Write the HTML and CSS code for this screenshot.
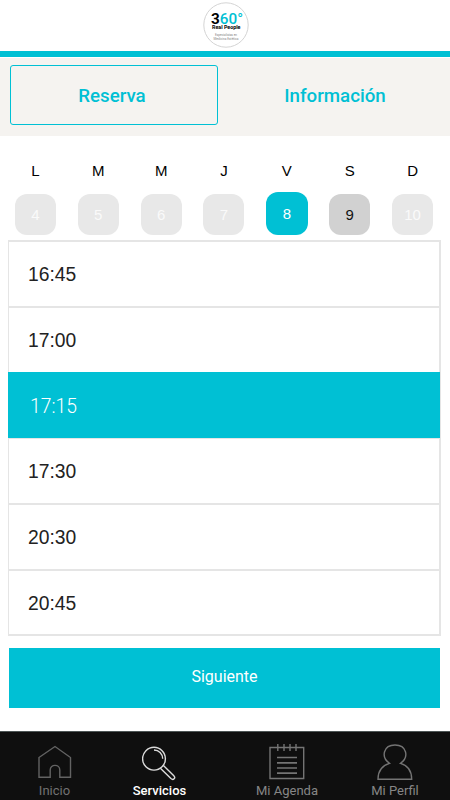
FILE: index.html
```html
<!DOCTYPE html>
<html lang="es">
<head>
    <meta charset="utf-8">
    <title>360 Real People</title>
    <meta name="viewport" content="width=device-width" />
    <link rel="stylesheet" href="styles.css">
</head>
<body>

<header class="header">
    <svg class="logo" width="46" height="46" viewBox="0 0 46 46">
        <circle cx="23" cy="23" r="22.2" fill="#fff" stroke="#d4d4d4" stroke-width="1"/>
        <text class="logo-number" x="8" y="21.5" textLength="32" lengthAdjust="spacingAndGlyphs">3<tspan class="logo-teal">60°</tspan></text>
        <text class="logo-name" x="9" y="27.3" textLength="28.5" lengthAdjust="spacingAndGlyphs">Real People</text>
        <text class="logo-tag" x="12" y="34.3" textLength="22" lengthAdjust="spacingAndGlyphs">Especialistas en</text>
        <text class="logo-tag" x="10.5" y="37.8" textLength="25" lengthAdjust="spacingAndGlyphs">Medicina Estética</text>
    </svg>
</header>

<div class="tabs">
    <a class="tab active">Reserva</a>
    <a class="tab">Información</a>
</div>

<div class="days">
    <div class="day"><span class="letter">L</span><span class="number">4</span></div>
    <div class="day"><span class="letter">M</span><span class="number">5</span></div>
    <div class="day"><span class="letter">M</span><span class="number">6</span></div>
    <div class="day"><span class="letter">J</span><span class="number">7</span></div>
    <div class="day"><span class="letter">V</span><span class="number selected">8</span></div>
    <div class="day"><span class="letter">S</span><span class="number available">9</span></div>
    <div class="day"><span class="letter">D</span><span class="number">10</span></div>
</div>

<ul class="hours">
    <li class="hour">16:45</li>
    <li class="hour">17:00</li>
    <li class="hour selected">17:15</li>
    <li class="hour">17:30</li>
    <li class="hour">20:30</li>
    <li class="hour">20:45</li>
</ul>

<button class="next">Siguiente</button>

<nav class="nav">
    <a class="nav-item home">
        <svg class="icon" width="36" height="38" viewBox="0 0 36 38">
            <path d="M2 14.5 L18 3.5 L33.5 14.5 V34.3 H22.8 V27 C22.8 20.8 13.2 20.8 13.2 27 V34.3 H2 Z"/>
        </svg>
        <span>Inicio</span>
    </a>
    <a class="nav-item active">
        <svg class="icon" width="36" height="38" viewBox="0 0 36 38">
            <circle cx="12" cy="15.7" r="11.4"/>
            <path d="M12 7 A8.8 8.8 0 0 1 20.7 15.7"/>
            <path d="M18.4 25.2 L28.9 35.5 C31.4 37.7 34 35 31.8 32.7 L21.2 22.3"/>
        </svg>
        <span>Servicios</span>
    </a>
    <a class="nav-item">
        <svg class="icon" width="36" height="38" viewBox="0 0 36 38">
            <path d="M1 4.5 H34.7 V35.5 H1 Z M8.8 1 V8 M15 1 V8 M21 1 V8 M27 1 V8"/>
            <path d="M8 14.5 H28 M8 19.8 H28 M8 25 H28 M8 30.2 H28" stroke-width="1.7"/>
        </svg>
        <span>Mi Agenda</span>
    </a>
    <a class="nav-item">
        <svg class="icon" width="36" height="38" viewBox="0 0 36 38">
            <path d="M12.5 20.3 C3.5 14 6.5 2 18 2 C29.5 2 32.5 14 23.5 20.3 C31 22.5 34.7 28 34.7 36.2 H1 C1 28 5 22.5 12.5 20.3 Z"/>
        </svg>
        <span>Mi Perfil</span>
    </a>
</nav>

</body>
</html>
```

FILE: styles.css
```css
* {
    box-sizing: border-box;
}

body {
    margin: 0;
    height: 800px;
    display: flex;
    flex-direction: column;
    background: #fff;
    font-family: Roboto, sans-serif;
}

.header {
    height: 57px;
    padding-top: 2px;
    border-bottom: 6px solid #00c0d4;
}

.logo {
    display: block;
    margin-left: 203px;
}

.logo-number {
    font-size: 14.5px;
    font-weight: bold;
}

.logo-teal {
    fill: #00bfd3;
    font-weight: 500;
}

.logo-name {
    font-size: 5.8px;
    font-weight: bold;
}

.logo-tag {
    font-size: 3px;
    fill: #888;
}

.tabs {
    display: flex;
    height: 78px;
    margin-top: 1px;
    padding: 7px 0 11px 10px;
    background: #f5f3f0;
}

.tab {
    flex: none;
    width: 208px;
    margin-right: 15px;
    padding-right: 4px;
    border: 1.5px solid transparent;
    border-radius: 3px;
    color: #00c0d4;
    font-size: 18.7px;
    font-weight: 500;
    line-height: 61px;
    text-align: center;
}

.tab.active {
    border-color: #00c0d4;
}

.days {
    display: grid;
    grid-template-columns: repeat(7, 1fr);
    margin: 26px 6px 0 4px;
    font-family: "Liberation Sans", sans-serif;
}

.day {
    display: flex;
    flex-direction: column;
    align-items: center;
}

.letter {
    height: 31px;
    font-size: 15px;
    line-height: 18px;
}

.number {
    width: 41px;
    height: 41px;
    margin-top: 1px;
    border-radius: 12px;
    background: #e8e8e8;
    color: #fafafa;
    font-size: 15px;
    line-height: 41px;
    text-align: center;
}

.number.available {
    background: #d1d1d1;
    color: #111;
}

.number.selected {
    width: 42px;
    height: 43px;
    margin-top: -1px;
    background: #00c0d4;
    color: #fff;
    line-height: 43px;
}

.hours {
    width: 433px;
    height: 396px;
    margin: 5px 0 0 8px;
    padding: 0;
    display: grid;
    grid-template-rows: 66px 66px 65px 66px 66px 63px;
    border: 2px solid #e5e5e5;
    border-left-width: 1px;
    list-style: none;
}

.hour {
    padding-left: 19px;
    border-bottom: 2px solid #e5e5e5;
    color: #222;
    font-family: "Liberation Sans", sans-serif;
    font-size: 19.3px;
    line-height: 66px;
}

.hour:last-child {
    border-bottom: 0;
}

.hour.selected {
    margin: -2px -1px 0;
    padding-left: 22px;
    border-bottom-width: 1px;
    background: #00c0d4;
    color: #fff;
    font-family: Roboto, sans-serif;
    font-size: 19.3px;
    font-weight: 300;
    line-height: 69px;
}

.next {
    width: 431px;
    height: 60px;
    margin: 12px 0 0 9px;
    padding: 0 0 3px;
    border: 0;
    background: #00c0d4;
    color: #fff;
    font-family: Roboto, sans-serif;
    font-size: 16px;
}

.nav {
    display: grid;
    grid-template-columns: 109px 101px 154px 62px;
    height: 69px;
    margin-top: auto;
    padding-top: 11px;
    border-top: 1px solid #4d5555;
    background: #0f0f0f;
}

.nav-item {
    display: flex;
    flex-direction: column;
    align-items: center;
    color: #868686;
    font-size: 13px;
    line-height: 19px;
    white-space: nowrap;
}

.nav-item.home {
    color: #727272;
}

.nav-item.active {
    color: #fff;
    font-weight: 500;
}

.icon {
    fill: none;
    stroke: currentColor;
    stroke-width: 1.4;
    opacity: .85;
}
```
